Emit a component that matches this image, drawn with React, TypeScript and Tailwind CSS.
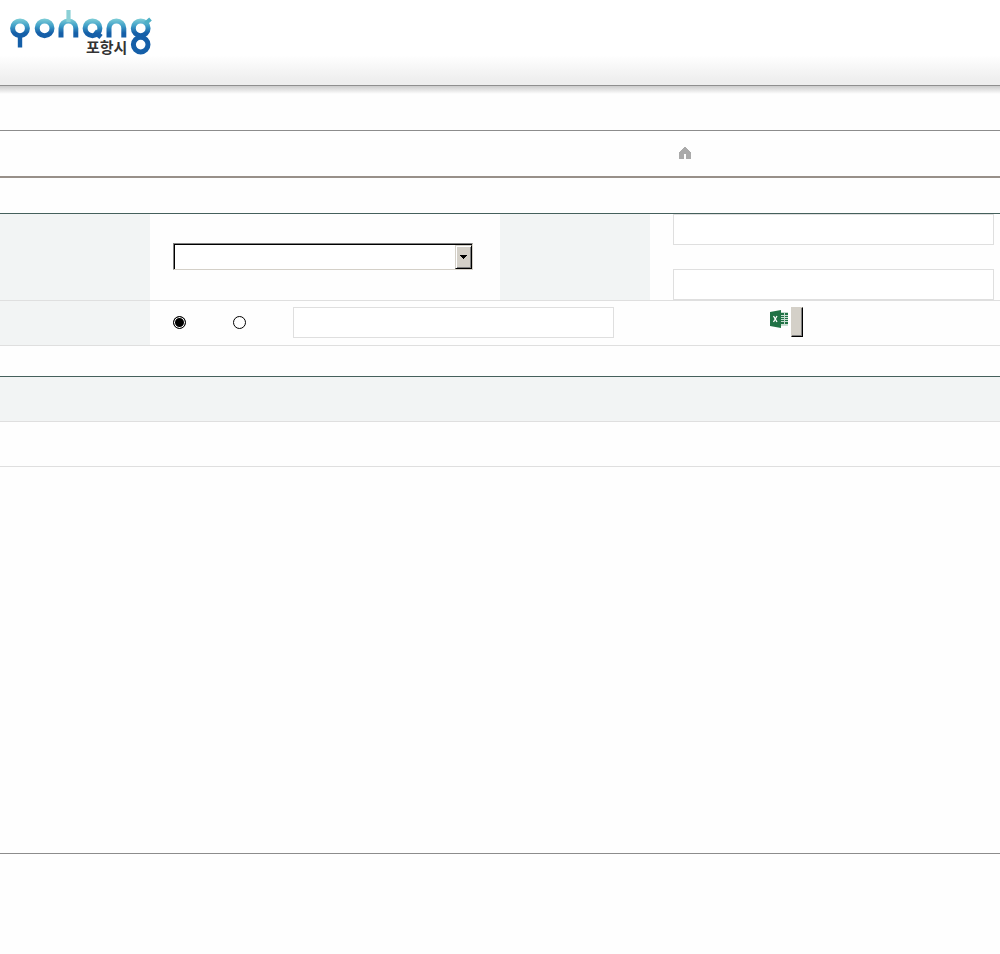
import { useState } from "react";

const Logo = () => (
  <svg width="146" height="48" viewBox="8 9 146 48" role="img" aria-label="Pohang" fill="none">
    <defs>
      <linearGradient id="wave" gradientUnits="userSpaceOnUse" x1="8" y1="18" x2="11" y2="38">
        <stop offset="0" stopColor="#84d2d8" />
        <stop offset="0.35" stopColor="#41a5ca" />
        <stop offset="0.7" stopColor="#155fa8" />
        <stop offset="1" stopColor="#155fa8" />
      </linearGradient>
      <linearGradient id="shade" gradientUnits="userSpaceOnUse" x1="0" y1="18" x2="0" y2="38">
        <stop offset="0" stopColor="#84d2d8" />
        <stop offset="0.4" stopColor="#3f9fc8" />
        <stop offset="0.75" stopColor="#155fa8" />
        <stop offset="1" stopColor="#155fa8" />
      </linearGradient>
    </defs>
    <g stroke="url(#shade)" strokeWidth="5">
      <circle cx="20" cy="28.3" r="7.4" />
      <path d="M20 35V47.5" stroke="#155fa8" strokeWidth="4.4" />
      <circle cx="44.6" cy="28.3" r="7.4" />
      <path d="M61 37.500V28.300a7.400 7.400 0 0 1 14.800 0V37.500" />
      <path d="M68.500 22V10" stroke="#8bd0d6" strokeWidth="4.200" />
      <circle cx="92.500" cy="28.300" r="7.400" />
      <path d="M94.500 31.500L101 37" />
      <path d="M109 37.500V28.300a7.400 7.400 0 0 1 14.800 0V37.500" />
      <circle cx="140.700" cy="28.300" r="7.400" />
      <path d="M145.500 23.500L150.500 19" stroke="#4db0c6" strokeWidth="4" />
    </g>
    <circle cx="140.700" cy="44.600" r="7.300" stroke="#155fa8" strokeWidth="5" />
    <text
      x="86"
      y="53"
      fontSize="15"
      fontWeight="700"
      fill="#333333"
      fontFamily="'Noto Sans CJK KR', sans-serif"
    >
      포항시
    </text>
  </svg>
);

const HomeIcon = () => (
  <svg width="12" height="12" viewBox="0 0 12 12" fill="#aaaaaa" shapeRendering="crispEdges">
    <path d="M5 0h2v1h1v1h1v1h1v1h1v1h1v7H7V7H5v5H0V5h1V4h1V3h1V2h1V1h1z" />
  </svg>
);

const ExcelIcon = () => (
  <svg width="18" height="18" viewBox="0 0 18 18">
    <path d="M10 2h8v14h-8z" fill="#c5dccf" />
    <path
      d="M11 3h3v2h-3zM15 3h3v2h-3zM11 6h3v1h-3zM15 6h3v1h-3zM11 8h3v1h-3zM15 8h3v1h-3zM11 10h3v1h-3zM15 10h3v1h-3zM11 12h3v2h-3zM15 12h3v2h-3z"
      fill="#207245"
    />
    <path d="M0 2L11 0v18L0 16z" fill="#207245" />
    <path d="M3.500 6l3.500 6M7 6l-3.500 6" stroke="#ffffff" strokeWidth="1.300" />
  </svg>
);

const inputStyle = "block h-[31px] border border-[#dfdfdf] bg-white px-2 text-sm outline-none";
const radioStyle =
  "size-[13px] appearance-none rounded-full border border-black bg-white checked:bg-black checked:shadow-[inset_0_0_0_1px_white]";

const App = () => {
  const [searchType, setSearchType] = useState("title");

  return (
    <div className="min-h-screen bg-[#fefefe] font-['Noto_Sans_CJK_KR',sans-serif] text-sm text-gray-800">
      <header>
        <div className="h-[86px] border-b border-[#8f8f8f] bg-linear-to-b from-white from-65% to-[#eeeeee] to-95% px-2 pt-[9px]">
          <a href="#" className="inline-block">
            <Logo />
          </a>
        </div>
        <div className="h-2 bg-linear-to-b from-[#cccccc] to-[#fefefe]" />
      </header>

      <nav className="mt-9 flex h-12 items-center border-t border-b-2 border-t-[#8c8c8c] border-b-[#989089] pb-0.5 pl-[679px]">
        <a href="#" aria-label="Home">
          <HomeIcon />
        </a>
      </nav>

      <main className="mt-[35px] h-[640px]">
        <form onSubmit={(e) => e.preventDefault()} className="border-t border-[#45605c]">
          <div className="grid h-[87px] grid-cols-[15%_35%_15%_35%] border-b border-[#dfdfdf]">
            <div className="bg-[#f2f4f4]" />
            <div className="flex items-center pr-[27px] pb-0.5 pl-[23px]">
              <div className="relative w-full">
                <select
                  aria-label="Department"
                  className="block h-[27px] w-full appearance-none border border-t-[#808080] border-r-[#d4d0c8] border-b-[#d4d0c8] border-l-[#808080] bg-white px-1 shadow-[inset_1px_1px_0_black] outline-none"
                />
                <span className="pointer-events-none absolute top-0.5 right-px flex h-6 w-[17px] items-center justify-center border border-t-[#d4d0c8] border-r-black border-b-black border-l-[#d4d0c8] bg-[#d4d0c8] shadow-[inset_1px_1px_0_white,inset_-1px_-1px_0_#808080]">
                  <svg width="7" height="4" viewBox="0 0 7 4" shapeRendering="crispEdges">
                    <path d="M0 0h7v1H6v1H5v1H4v1H3V3H2V2H1V1H0z" />
                  </svg>
                </span>
              </div>
            </div>
            <div className="bg-[#f2f4f4]" />
            <div className="flex flex-col justify-between pr-1.5 pl-[23px]">
              <input type="text" aria-label="Start date" className={`${inputStyle} w-full`} />
              <input type="text" aria-label="End date" className={`${inputStyle} w-full`} />
            </div>
          </div>

          <div className="grid h-[45px] grid-cols-[15%_85%] border-b border-[#dfdfdf]">
            <div className="bg-[#f2f4f4]" />
            <div className="flex items-center pb-0.5 pl-[23px]">
              <div className="flex gap-[47px]">
                <input
                  type="radio"
                  name="searchType"
                  aria-label="Title"
                  className={radioStyle}
                  checked={searchType === "title"}
                  onChange={() => setSearchType("title")}
                />
                <input
                  type="radio"
                  name="searchType"
                  aria-label="Content"
                  className={radioStyle}
                  checked={searchType === "content"}
                  onChange={() => setSearchType("content")}
                />
              </div>
              <input type="text" aria-label="Keyword" className={`${inputStyle} ml-[47px] w-[321px]`} />
              <div className="ml-[156px] flex gap-[3px]">
                <a href="#" aria-label="Excel download" className="mt-[3px]">
                  <ExcelIcon />
                </a>
                <button
                  type="submit"
                  aria-label="Search"
                  className="h-[30px] w-3 border border-t-[#d4d0c8] border-r-black border-b-black border-l-[#d4d0c8] bg-[#d4d0c8] shadow-[inset_-1px_-1px_0_#808080]"
                />
              </div>
            </div>
          </div>
        </form>

        {/* Result list */}
        <table className="mt-[30px] w-full border-separate border-spacing-0 border-t border-[#45605c]">
          <thead>
            <tr>
              <th className="h-[45px] border-b border-[#dfdfdf] bg-[#f2f4f4] p-0" />
            </tr>
          </thead>
          <tbody>
            <tr>
              <td className="h-[45px] border-b border-[#dfdfdf] p-0" />
            </tr>
          </tbody>
        </table>
      </main>

      <footer className="h-[100px] border-t border-[#8c8c8c]" />
    </div>
  );
};

export default App;
